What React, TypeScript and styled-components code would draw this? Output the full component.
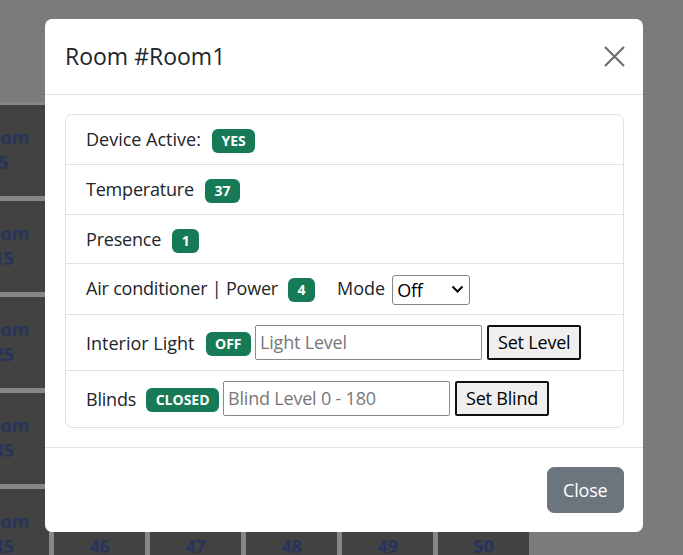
import React from "react";
import styled, { createGlobalStyle } from "styled-components";

const GlobalStyle = createGlobalStyle`
  html, body {
    margin: 0;
    padding: 0;
    background: #7b7b7b;
    overflow: hidden;
  }
  body {
    font-family: "Open Sans", "Noto Sans", sans-serif;
    color: #212529;
  }
  * { box-sizing: border-box; }
`;

const Board = styled.div`
  display: grid;
  grid-template-columns: repeat(6, 91px);
  grid-auto-rows: 91px;
  gap: 5px;
  width: max-content;
  margin: 102px 0 0 -42px;
  padding: 3px 0 0 0;
  background: #878787;
`;

const Tile = styled.div`
  background: #424242;
  color: #27345c;
  font-weight: 700;
  font-size: 18px;
  line-height: 25px;
  text-align: center;
  padding-top: 20px;
`;

const Dialog = styled.div`
  position: absolute;
  left: 45px;
  top: 19px;
  width: 598px;
  background: #fff;
  border-radius: 7px;
  display: flex;
  flex-direction: column;
`;

const Header = styled.div`
  height: 76px;
  display: flex;
  align-items: center;
  justify-content: space-between;
  padding: 0 18px 0 20px;
  border-bottom: 1px solid #dee2e6;
`;

const Title = styled.h5`
  margin: 0;
  font-size: 23px;
  font-weight: 400;
  line-height: 1.2;
  color: #212529;
`;

const CloseX = styled.button`
  width: 22px;
  height: 22px;
  padding: 0;
  border: 0;
  background: transparent;
  display: flex;
  align-items: center;
  justify-content: center;
  color: #6e6e6e;
`;

const Body = styled.div`
  padding: 19px 19px 19px 20px;
`;

const ListGroup = styled.div`
  border: 1px solid #dee2e6;
  border-radius: 7px;
`;

const Item = styled.div<{ $bottom?: number }>`
  padding: 10px 19px ${(p) => p.$bottom ?? 10}px 20px;
  font-size: 18px;
  letter-spacing: -0.2px;
  line-height: 28.8px;
  white-space: nowrap;
  & + & {
    border-top: 1px solid #dee2e6;
  }
`;

const Badge = styled.span<{ $gap?: number }>`
  display: inline-block;
  margin-left: ${(p) => p.$gap ?? 10}px;
  padding: 5px 9.5px;
  font-size: 14px;
  font-weight: 700;
  letter-spacing: 0;
  line-height: 1;
  vertical-align: baseline;
  color: #fff;
  background: #157a55;
  border-radius: 6px;
`;

const Label = styled.span<{ $gap?: number }>`
  margin-left: ${(p) => p.$gap ?? 0}px;
  letter-spacing: 0;
`;

const SelectWrap = styled.span`
  position: relative;
  display: inline-block;
  margin: -2px 0 -2px 7px;
  vertical-align: middle;
  top: -1px;
`;

const Select = styled.select`
  appearance: none;
  display: block;
  width: 78px;
  height: 30px;
  padding: 0 0 0 4px;
  font-family: inherit;
  font-size: 18px;
  letter-spacing: -0.2px;
  color: #000;
  background: #fff;
  border: 1px solid #858585;
  border-radius: 3px;
`;

const Chevron = styled.svg`
  position: absolute;
  right: 6px;
  top: 10px;
  pointer-events: none;
`;

const TextInput = styled.input`
  width: 227px;
  height: 35px;
  margin-left: 4px;
  padding: 0 4px;
  font-family: inherit;
  font-size: 18px;
  letter-spacing: -0.2px;
  color: #212529;
  border: 1px solid #8a8a8a;
  border-radius: 2px;
  &::placeholder {
    color: #777;
  }
`;

const PlainButton = styled.button`
  height: 35px;
  margin-left: 5px;
  padding: 0 9px;
  font-family: inherit;
  font-size: 18px;
  letter-spacing: -0.2px;
  color: #000;
  background: #efefef;
  border: 2px solid #111;
  border-radius: 2px;
`;

const Footer = styled.div`
  display: flex;
  justify-content: flex-end;
  padding: 19px;
  border-top: 1px solid #dee2e6;
`;

const SecondaryButton = styled.button`
  height: 46px;
  padding: 0 15.5px;
  font-family: inherit;
  font-size: 18px;
  letter-spacing: -0.2px;
  color: #fff;
  background: #6c757d;
  border: 1px solid #6c757d;
  border-radius: 7px;
`;

export default function App() {
  const tiles: number[] = [];
  for (let r = 0; r < 5; r++) {
    for (let c = 0; c < 6; c++) tiles.push(r * 10 + 5 + c);
  }
  return (
    <>
      <GlobalStyle />
      <Board>
        {tiles.map((n) => (
          <Tile key={n}>
            Room
            <br />
            {n}
          </Tile>
        ))}
      </Board>
      <Dialog role="dialog">
        <Header>
          <Title>Room #Room1</Title>
          <CloseX aria-label="Close">
            <svg width="21" height="21" viewBox="0 0 21 21">
              <path d="M1 1L20 20M20 1L1 20" stroke="currentColor" strokeWidth="2.2" fill="none" />
            </svg>
          </CloseX>
        </Header>
        <Body>
          <ListGroup>
            <Item>
              <Label>Device Active:</Label>
              <Badge $gap={11}>YES</Badge>
            </Item>
            <Item>
              Temperature<Badge $gap={11}>37</Badge>
            </Item>
            <Item>
              Presence<Badge $gap={11}>1</Badge>
            </Item>
            <Item>
              Air conditioner | Power<Badge>4</Badge>
              <Label $gap={22}>Mode</Label>
              <SelectWrap>
                <Select defaultValue="Off">
                  <option>Off</option>
                  <option>Cool</option>
                  <option>Heat</option>
                </Select>
                <Chevron width="13" height="9" viewBox="0 0 13 9">
                  <path d="M1.5 1.5L6.5 6.5L11.5 1.5" stroke="#000" strokeWidth="2" fill="none" />
                </Chevron>
              </SelectWrap>
            </Item>
            <Item>
              <Label>Interior Light</Label>
              <Badge $gap={11}>OFF</Badge>
              <TextInput placeholder="Light Level" />
              <PlainButton>Set Level</PlainButton>
            </Item>
            <Item $bottom={11}>
              Blinds<Badge>CLOSED</Badge>
              <TextInput placeholder="Blind Level 0 - 180" />
              <PlainButton>Set Blind</PlainButton>
            </Item>
          </ListGroup>
        </Body>
        <Footer>
          <SecondaryButton>Close</SecondaryButton>
        </Footer>
      </Dialog>
    </>
  );
}
